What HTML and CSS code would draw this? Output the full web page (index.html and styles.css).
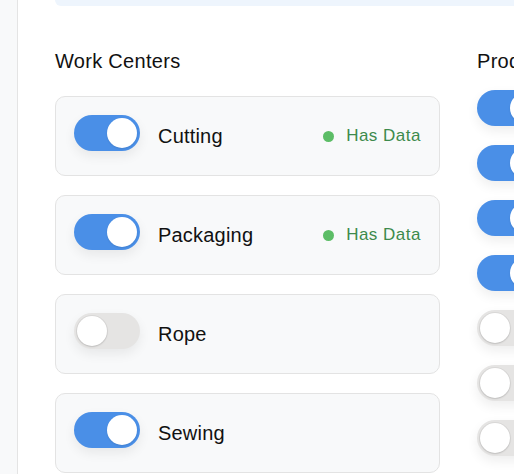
FILE: index.html
```html
<!DOCTYPE html>
<html>
<head>
<meta charset="utf-8">
<link rel="stylesheet" href="styles.css">
</head>
<body>
<aside class="sidebar"></aside>
<main class="main">
  <div class="banner"></div>
  <div class="columns">
    <section class="col col-centers">
      <h2 class="col-title">Work Centers</h2>
      <div class="card-list">
        <div class="card">
          <span class="toggle on"><span class="knob"></span></span>
          <span class="label">Cutting</span>
          <span class="status"><span class="dot"></span>Has Data</span>
        </div>
        <div class="card">
          <span class="toggle on"><span class="knob"></span></span>
          <span class="label">Packaging</span>
          <span class="status"><span class="dot"></span>Has Data</span>
        </div>
        <div class="card">
          <span class="toggle"><span class="knob"></span></span>
          <span class="label">Rope</span>
        </div>
        <div class="card">
          <span class="toggle on"><span class="knob"></span></span>
          <span class="label">Sewing</span>
        </div>
      </div>
    </section>
    <section class="col col-products">
      <h2 class="col-title">Products</h2>
      <div class="toggle-list">
        <span class="toggle on"><span class="knob"></span></span>
        <span class="toggle on"><span class="knob"></span></span>
        <span class="toggle on"><span class="knob"></span></span>
        <span class="toggle on"><span class="knob"></span></span>
        <span class="toggle"><span class="knob"></span></span>
        <span class="toggle"><span class="knob"></span></span>
        <span class="toggle"><span class="knob"></span></span>
      </div>
    </section>
  </div>
</main>
</body>
</html>
```
FILE: styles.css
```css
html, body {
  margin: 0;
  padding: 0;
  height: 474px;
  overflow: hidden;
  background: #ffffff;
  font-family: "Liberation Sans", Arial, Helvetica, sans-serif;
  color: #1a1a1a;
}
body {
  display: flex;
}
.sidebar {
  flex: none;
  width: 17px;
  height: 474px;
  background: #f8f9fa;
  border-right: 1px solid #e4e4e4;
}
.main {
  flex: 1;
  min-width: 0;
  padding-left: 37px;
}
.banner {
  height: 6px;
  background: #eef5fd;
  border-radius: 0 0 0 10px;
  margin-right: -40px;
}
.columns {
  display: flex;
  gap: 37px;
  margin-top: 43px;
}
.col {
  flex: none;
}
.col-centers {
  width: 385px;
}
.col-products {
  width: 200px;
}
.col-title {
  margin: 0;
  font-size: 20px;
  font-weight: normal;
  line-height: 24px;
  letter-spacing: 0.3px;
  color: #111;
}
.card-list {
  display: flex;
  flex-direction: column;
  gap: 19px;
  margin-top: 23px;
}
.card {
  box-sizing: border-box;
  height: 80px;
  display: flex;
  align-items: center;
  padding: 0 18px;
  background: #f8f9fa;
  border: 1px solid #e3e3e3;
  border-radius: 10px;
}
.card .toggle {
  margin-bottom: 6px;
}
.label {
  margin-left: 18px;
  font-size: 20px;
  letter-spacing: 0.2px;
  color: #111;
}
.status {
  margin-left: auto;
  display: flex;
  align-items: center;
  font-size: 17px;
  color: #3d8a4c;
  letter-spacing: 0.5px;
}
.dot {
  width: 11px;
  height: 11px;
  border-radius: 50%;
  background: #5cbd66;
  margin-right: 12px;
}
.toggle {
  flex: none;
  box-sizing: border-box;
  display: flex;
  align-items: center;
  width: 66px;
  height: 36px;
  padding: 3px;
  border-radius: 18px;
  background: #e5e4e3;
  box-shadow: 0 5px 12px rgba(0, 0, 0, 0.07);
}
.toggle.on {
  background: #4a8fe7;
  justify-content: flex-end;
}
.knob {
  width: 30px;
  height: 30px;
  border-radius: 50%;
  background: #ffffff;
  box-shadow: 0 0 0 1px rgba(0, 0, 0, 0.05), 0 1px 2px rgba(0, 0, 0, 0.12);
}
.toggle.on .knob {
  box-shadow: 0 1px 2px rgba(0, 0, 0, 0.1);
}
.toggle-list {
  display: flex;
  flex-direction: column;
  align-items: flex-start;
  gap: 19px;
  margin-top: 17px;
}
```
